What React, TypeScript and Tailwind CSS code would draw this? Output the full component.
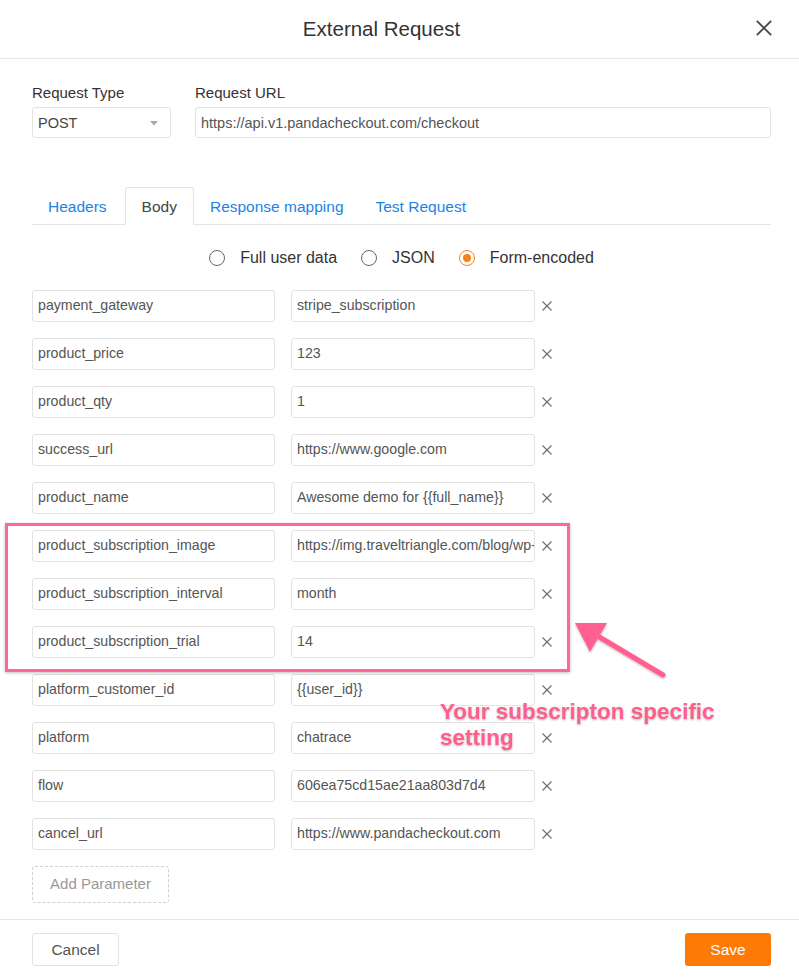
import React from "react";

const rows: [string, string][] = [
  ["payment_gateway", "stripe_subscription"],
  ["product_price", "123"],
  ["product_qty", "1"],
  ["success_url", "https://www.google.com"],
  ["product_name", "Awesome demo for {{full_name}}"],
  ["product_subscription_image", "https://img.traveltriangle.com/blog/wp-content/uploads/2019/09/cover.jpg"],
  ["product_subscription_interval", "month"],
  ["product_subscription_trial", "14"],
  ["platform_customer_id", "{{user_id}}"],
  ["platform", "chatrace"],
  ["flow", "606ea75cd15ae21aa803d7d4"],
  ["cancel_url", "https://www.pandacheckout.com"],
];

function XIcon({ size = 10, color = "#6b6b6b", w = 1.1 }: { size?: number; color?: string; w?: number }) {
  return (
    <svg width={size} height={size} viewBox="0 0 10 10">
      <path d="M0.5 0.5L9.5 9.5M9.5 0.5L0.5 9.5" stroke={color} strokeWidth={w} fill="none" />
    </svg>
  );
}

function Radio({ checked, label }: { checked?: boolean; label: string }) {
  return (
    <div className="flex items-center gap-[15px]">
      <span
        className={
          checked
            ? "w-[16px] h-[16px] rounded-full border border-[#f7821b] flex items-center justify-center"
            : "w-[16px] h-[16px] rounded-full border-[1.5px] border-[#666]"
        }
      >
        {checked && <span className="w-[8px] h-[8px] rounded-full bg-[#f7821b]" />}
      </span>
      <span className="text-[16px] text-[#333]">{label}</span>
    </div>
  );
}

export default function App() {
  return (
    <div className="relative w-[799px] h-[980px] bg-white overflow-hidden font-['Liberation_Sans',Arial,sans-serif] text-[#555]">
      {/* Header */}
      <div className="relative h-[59px] border-b border-[#e6e6e6] flex items-center justify-center pr-[36px]">
        <span className="text-[20.5px] text-[#333] pt-[1px]">External Request</span>
        <button className="absolute right-[27px] top-[20px]">
          <XIcon size={16} color="#444" w={1.1} />
        </button>
      </div>

      {/* Body */}
      <div className="pl-8 pr-7 pt-[24px]">
        <div className="flex gap-6">
          <div className="w-[139px] shrink-0">
            <div className="h-5 leading-5 text-[15px] text-[#333]">Request Type</div>
            <div className="mt-1 h-[31px] border border-[#e3e3e3] rounded-[3px] flex items-center justify-between pl-[5px] pr-[12px] pt-[2px]">
              <span className="text-[14.5px] text-[#444]">POST</span>
              <svg width="8" height="5" viewBox="0 0 8 5">
                <path d="M0 0H8L4 4.5Z" fill="#aaa" />
              </svg>
            </div>
          </div>
          <div className="flex-1">
            <div className="h-5 leading-5 text-[15px] text-[#333]">Request URL</div>
            <div className="mt-1 h-[31px] border border-[#e3e3e3] rounded-[3px] flex items-center px-[5px] pt-[2px]">
              <span className="text-[14.5px] text-[#555]">https://api.v1.pandacheckout.com/checkout</span>
            </div>
          </div>
        </div>

        {/* Tabs */}
        <div className="mt-[49px] flex border-b border-[#e5e5e5] h-[38px]">
          <div className="h-[37px] px-4 pt-[2px] flex items-center text-[15.5px] text-[#1a84e6]">Headers</div>
          <div className="ml-[2px] h-[38px] px-4 pt-[2px] flex items-center text-[15.5px] text-[#444] border border-[#e2e2e2] border-b-white rounded-t-[3px] bg-white">
            Body
          </div>
          <div className="h-[37px] px-4 pt-[2px] flex items-center text-[15.5px] text-[#1a84e6]">Response mapping</div>
          <div className="h-[37px] px-4 pt-[2px] flex items-center text-[15.5px] text-[#1a84e6]">Test Request</div>
        </div>

        {/* Radios */}
        <div className="mt-[23px] h-5 flex items-center justify-center gap-6">
          <Radio label="Full user data" />
          <Radio label="JSON" />
          <Radio checked label="Form-encoded" />
        </div>

        {/* Params */}
        <div className="mt-[22px] flex flex-col gap-4">
          {rows.map(([k, v]) => (
            <div key={k} className="flex items-center h-8">
              <div className="w-[243px] h-8 border border-[#e3e3e3] rounded-[3px] flex items-center px-[5px] overflow-hidden">
                <span className="text-[14.2px] text-[#555] whitespace-nowrap">{k}</span>
              </div>
              <div className="ml-4 w-[244px] h-8 border border-[#e3e3e3] rounded-[3px] flex items-center px-[5px] overflow-hidden">
                <span className="text-[14.2px] text-[#555] whitespace-nowrap">{v}</span>
              </div>
              <span className="ml-[7px] flex items-center">
                <XIcon />
              </span>
            </div>
          ))}
        </div>

        <button className="mt-4 w-[137px] h-[37px] border border-dashed border-[#d0d0d0] rounded-[3px] text-[15px] text-[#999]">
          Add Parameter
        </button>
      </div>

      {/* Footer */}
      <div className="mt-4 border-t border-[#e6e6e6] pl-8 pr-7 pt-[13px] flex justify-between">
        <button className="w-[87px] h-[33px] border border-[#e3e3e3] rounded-[3px] text-[15.5px] text-[#555]">
          Cancel
        </button>
        <button className="w-[86px] h-[33px] rounded-[3px] bg-[#fc7a05] text-[15.5px] text-white">Save</button>
      </div>

      {/* Annotation overlays */}
      <div className="absolute left-[5px] top-[523px] w-[565px] h-[149px] border-[3px] border-[#ff6893] shadow-[0_1px_3px_rgba(0,0,0,0.25)]" />
      <svg className="absolute left-[570px] top-[615px]" width="100" height="70" viewBox="0 0 100 70">
        <defs>
          <filter id="sh" x="-20%" y="-20%" width="140%" height="140%">
            <feDropShadow dx="0" dy="1" stdDeviation="1" floodColor="#000" floodOpacity="0.3" />
          </filter>
        </defs>
        <g filter="url(#sh)">
          <path d="M93 60L26 20" stroke="#ff6190" strokeWidth="5" strokeLinecap="round" fill="none" />
          <path d="M5 8L37 8L20 37Z" fill="#ff6190" />
        </g>
      </svg>
      <div className="absolute left-[440px] top-[699px] text-[22.5px] leading-[26px] font-bold text-[#ff5d8c] [text-shadow:0_0_2px_#fff,0_1px_2px_rgba(0,0,0,0.35)]">
        Your subscripton specific
        <br />
        setting
      </div>
    </div>
  );
}
